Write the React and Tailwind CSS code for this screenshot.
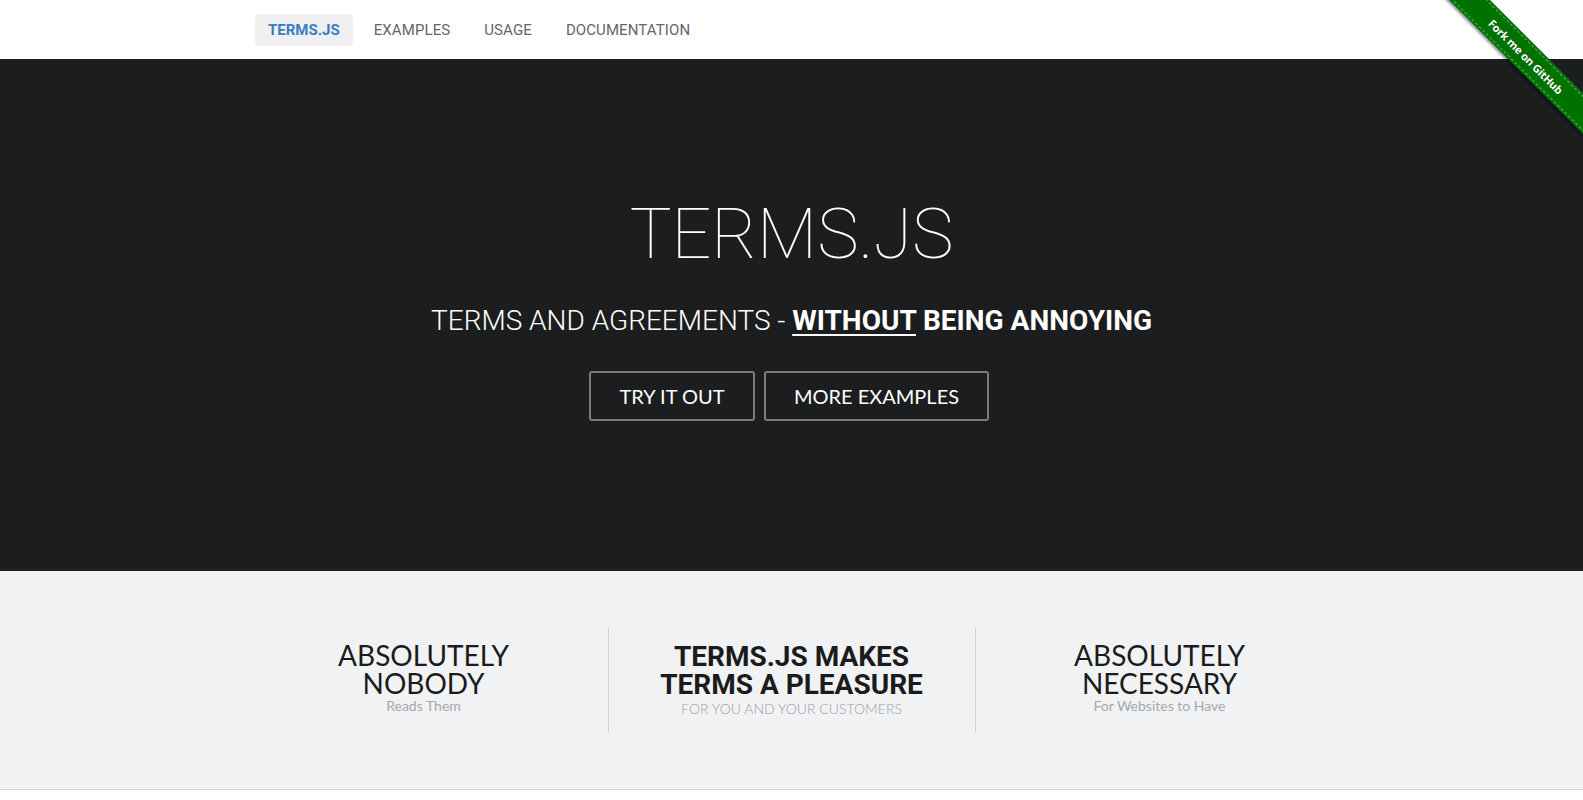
import React from "react";

function Ribbon() {
  return (
    <div className="absolute top-0 right-0 w-[150px] h-[150px] overflow-hidden pointer-events-none z-10">
      <div className="absolute left-[-17px] top-[42px] w-[220px] h-[29px] rotate-45 bg-[#007200] flex items-center justify-center shadow-[0_2px_3px_rgba(0,0,0,0.45)]">
        <div className="absolute inset-x-0 top-[2px] border-t border-dashed border-white/40" />
        <div className="absolute inset-x-0 bottom-[2px] border-t border-dashed border-white/40" />
        <span className="text-white text-[11px] font-bold leading-none tracking-[-0.2px] [font-family:'Open_Sans',sans-serif] [text-shadow:0_-1px_rgba(0,0,0,0.4)]">
          Fork me on GitHub
        </span>
      </div>
    </div>
  );
}

function Nav() {
  const items = ["EXAMPLES", "USAGE", "DOCUMENTATION"];
  return (
    <nav className="h-[59px] bg-white flex items-center">
      <div className="flex items-center gap-[8px] pl-[255px] pt-[1px]">
        <a className="h-[32px] px-[13px] flex items-center rounded-[4px] bg-[#f0f0f0] text-[15px] font-bold text-[#3b7dc4]">
          TERMS.JS
        </a>
        {items.map((t) => (
          <a key={t} className="h-[32px] px-[13px] flex items-center text-[15px] tracking-[0.1px] text-[#666]">
            {t}
          </a>
        ))}
      </div>
    </nav>
  );
}

function Hero() {
  return (
    <section className="bg-[#1c1d1f] h-[512px] flex flex-col items-center pt-[140px] text-white">
      <h1 className="text-[70px] leading-none font-thin">TERMS.JS</h1>
      <p className="mt-[38px] text-[28px] leading-none font-light">
        TERMS AND AGREEMENTS -{" "}
        <span className="font-bold">
          <span className="underline decoration-[2px] underline-offset-[4px]">WITHOUT</span> BEING ANNOYING
        </span>
      </p>
      <div className="mt-[36px] mr-[5px] flex gap-[9px] [font-family:Lato,sans-serif]">
        <button className="h-[50px] w-[166px] border-2 border-[#7b7b7b] rounded-[3px] text-[20px] text-white">
          TRY IT OUT
        </button>
        <button className="h-[50px] w-[225px] border-2 border-[#7b7b7b] rounded-[3px] text-[20px] text-white">
          MORE EXAMPLES
        </button>
      </div>
    </section>
  );
}

function Features() {
  return (
    <section className="bg-[#f1f2f4] border-b border-[#d2d2d2] py-[56px] flex justify-center">
      <div className="flex">
        <div className="w-[368px] h-[106px] pt-[14px] flex flex-col items-center text-center [font-family:Lato,sans-serif]">
          <div className="text-[28px] leading-[28px] text-[#1b1b1b]">ABSOLUTELY<br />NOBODY</div>
          <div className="mt-[1px] text-[14px] leading-[16px] text-[#a4a9ae]">Reads Them</div>
        </div>
        <div className="w-[368px] h-[106px] pt-[16px] flex flex-col items-center text-center border-x border-[#d4d4d4]">
          <div className="text-[28px] leading-[28px] font-bold text-[#1b1b1b]">TERMS.JS MAKES<br />TERMS A PLEASURE</div>
          <div className="mt-[2px] text-[14px] leading-[16px] font-light text-[#9a9fa4] [font-family:Lato,sans-serif]">FOR YOU AND YOUR CUSTOMERS</div>
        </div>
        <div className="w-[368px] h-[106px] pt-[14px] flex flex-col items-center text-center [font-family:Lato,sans-serif]">
          <div className="text-[28px] leading-[28px] text-[#1b1b1b]">ABSOLUTELY<br />NECESSARY</div>
          <div className="mt-[1px] text-[14px] leading-[16px] text-[#a4a9ae]">For Websites to Have</div>
        </div>
      </div>
    </section>
  );
}

export default function App() {
  return (
    <div className="relative min-h-[800px] bg-white [font-family:Roboto,sans-serif]">
      <Ribbon />
      <Nav />
      <Hero />
      <Features />
    </div>
  );
}
